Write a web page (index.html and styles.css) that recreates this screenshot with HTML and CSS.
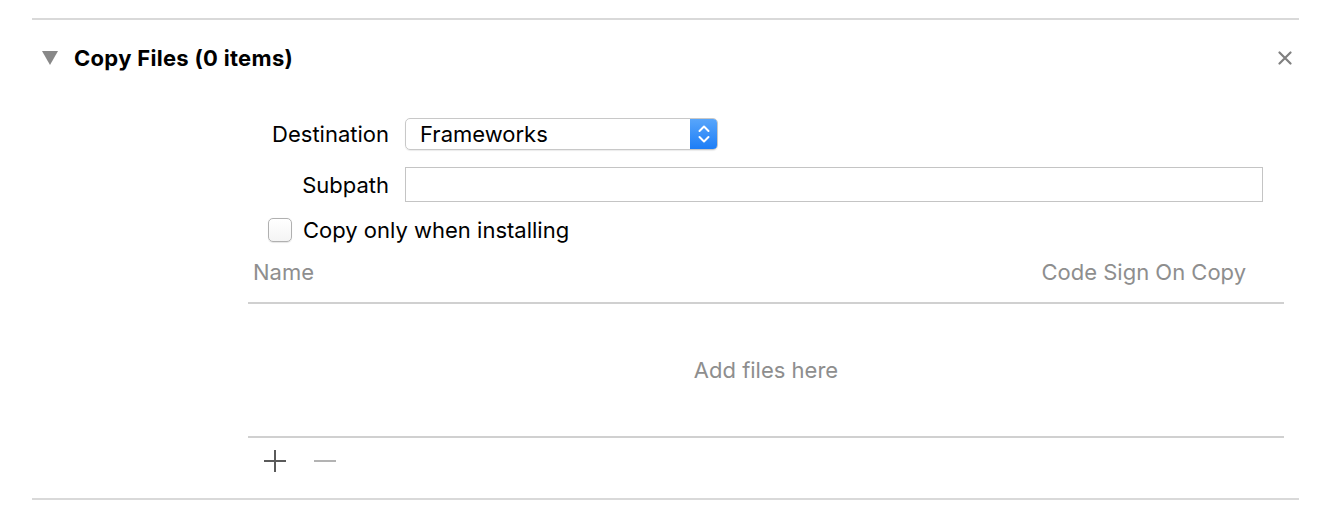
FILE: index.html
```html
<!DOCTYPE html>
<html>
<head>
<meta charset="utf-8">
<link rel="stylesheet" href="styles.css">
</head>
<body>
<section class="phase">
  <header class="phase-head">
    <span class="disclosure"></span>
    <h2 class="phase-title">Copy Files (0 items)</h2>
    <button class="close" aria-label="Remove">
      <svg width="14" height="14" viewBox="0 0 14 14"><path d="M1.5 1.5 L12.5 12.5 M12.5 1.5 L1.5 12.5" stroke="#808080" stroke-width="2.2" stroke-linecap="round"/></svg>
    </button>
  </header>
  <div class="phase-body">
    <div class="form">
      <label class="f-label">Destination</label>
      <div class="popup">
        <span class="popup-text">Frameworks</span>
        <span class="popup-arrows">
          <svg width="14" height="22" viewBox="0 0 14 22"><path d="M2.5 8 L7 3.5 L11.5 8 M2.5 14 L7 18.5 L11.5 14" fill="none" stroke="#fff" stroke-width="2" stroke-linecap="round" stroke-linejoin="round"/></svg>
        </span>
      </div>
      <label class="f-label sub">Subpath</label>
      <div class="textfield"></div>
    </div>
    <div class="check-row">
      <span class="checkbox"></span>
      <span class="check-label">Copy only when installing</span>
    </div>
    <div class="table">
      <div class="table-head">
        <span>Name</span>
        <span>Code Sign On Copy</span>
      </div>
      <div class="table-empty">Add files here</div>
      <div class="table-foot">
        <span class="tool plus">
          <svg width="22" height="22" viewBox="0 0 22 22"><path d="M0 11 H22 M11 0 V22" stroke="#5a5a5a" stroke-width="2"/></svg>
        </span>
        <span class="tool minus">
          <svg width="22" height="22" viewBox="0 0 22 22"><path d="M0 11 H22" stroke="#b3b3b3" stroke-width="2"/></svg>
        </span>
      </div>
    </div>
  </div>
</section>
</body>
</html>
```

FILE: styles.css
```css
* { box-sizing: border-box; }
html, body {
  margin: 0;
  padding: 0;
  background: #ffffff;
  font-family: Inter, "Liberation Sans", Arial, sans-serif;
  color: #000;
}
.phase {
  margin: 18px 27px 0 32px;
  border-top: 2px solid #d9d9d9;
  border-bottom: 2px solid #d9d9d9;
  height: 482px;
  display: flex;
  flex-direction: column;
}
.phase-head {
  display: flex;
  align-items: center;
  height: 76px;
  padding-left: 10px;
  padding-right: 7px;
}
.disclosure {
  width: 0;
  height: 0;
  border-left: 8.5px solid transparent;
  border-right: 8.5px solid transparent;
  border-top: 14px solid #888888;
}
.phase-title {
  margin: 0 0 0 16px;
  font-size: 22px;
  font-weight: 700;
  letter-spacing: 0.3px;
  flex: 1;
}
.close {
  border: 0;
  background: none;
  padding: 0;
  width: 14px;
  height: 14px;
  display: flex;
}
.phase-body {
  margin-left: 216px;
  margin-right: 15px;
  display: flex;
  flex-direction: column;
}
.form {
  display: grid;
  grid-template-columns: 141px 858px;
  column-gap: 16px;
  row-gap: 17px;
  align-items: center;
  margin-top: 22px;
}
.f-label {
  text-align: right;
  font-size: 22px;
  line-height: 28px;
}
.popup {
  width: 313px;
  height: 32px;
  border: 1px solid #c8c8c8;
  border-radius: 5px;
  display: flex;
  align-items: center;
  justify-content: space-between;
  box-shadow: 0 1px 1px rgba(0,0,0,0.08);
  overflow: hidden;
}
.popup-text {
  font-size: 22px;
  line-height: 28px;
  padding-left: 14px;
}
.popup-arrows {
  width: 28px;
  height: 32px;
  margin-right: -1px;
  background: linear-gradient(#5aa7fb, #1b7cf6);
  display: flex;
  align-items: center;
  justify-content: center;
  border-radius: 0 5px 5px 0;
}
.textfield {
  height: 35px;
  border: 1px solid #c4c4c4;
  background: #fff;
}
.check-row {
  display: flex;
  align-items: center;
  margin-top: 16px;
  padding-left: 20px;
  height: 24px;
}
.checkbox {
  width: 24px;
  height: 24px;
  border: 1px solid #b0b0b0;
  border-radius: 5px;
  background: linear-gradient(#ffffff, #f4f4f4);
  box-shadow: 0 0.5px 1px rgba(0,0,0,0.1);
}
.check-label {
  font-size: 22px;
  line-height: 24px;
  margin-left: 11px;
}
.table {
  display: flex;
  flex-direction: column;
}
.table-head {
  display: flex;
  justify-content: space-between;
  align-items: center;
  height: 62px;
  padding: 0 38px 0 5px;
  color: #8e8e8e;
  font-size: 22px;
  border-bottom: 2px solid #d0d0d0;
}
.table-empty {
  height: 134px;
  display: flex;
  align-items: center;
  justify-content: center;
  color: #8e8e8e;
  font-size: 22px;
  border-bottom: 2px solid #d0d0d0;
}
.table-foot {
  display: flex;
  align-items: center;
  gap: 28px;
  height: 46px;
  padding-left: 16px;
}
.tool {
  display: flex;
  width: 22px;
  height: 22px;
}
```
